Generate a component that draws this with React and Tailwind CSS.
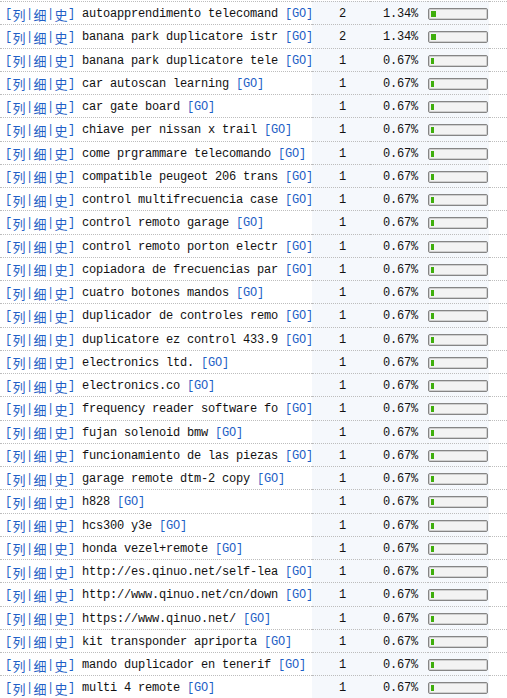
import React from 'react'

const rows = [
  ['autoapprendimento telecomand', 2],
  ['banana park duplicatore istr', 2],
  ['banana park duplicatore tele', 1],
  ['car autoscan learning', 1],
  ['car gate board', 1],
  ['chiave per nissan x trail', 1],
  ['come prgrammare telecomando', 1],
  ['compatible peugeot 206 trans', 1],
  ['control multifrecuencia case', 1],
  ['control remoto garage', 1],
  ['control remoto porton electr', 1],
  ['copiadora de frecuencias par', 1],
  ['cuatro botones mandos', 1],
  ['duplicador de controles remo', 1],
  ['duplicatore ez control 433.9', 1],
  ['electronics ltd.', 1],
  ['electronics.co', 1],
  ['frequency reader software fo', 1],
  ['fujan solenoid bmw', 1],
  ['funcionamiento de las piezas', 1],
  ['garage remote dtm-2 copy', 1],
  ['h828', 1],
  ['hcs300 y3e', 1],
  ['honda vezel+remote', 1],
  ['http://es.qinuo.net/self-lea', 1],
  ['http://www.qinuo.net/cn/down', 1],
  ['https://www.qinuo.net/', 1],
  ['kit transponder apriporta', 1],
  ['mando duplicador en tenerif', 1],
  ['multi 4 remote', 1],
]

const mono = "font-['Liberation_Mono','Noto_Sans_CJK_SC',monospace] text-[12px] tracking-[-0.2px]"
const cjk = "font-['Noto_Sans_CJK_SC',sans-serif] text-[13px]"

function Tag() {
  const parts = ['[', '列', '|', '细', '|', '史', ']']
  return (
    <span className="inline-flex items-center text-[#1f5fc6]">
      {parts.map((p, i) =>
        /[\u4e00-\u9fff]/.test(p) ? (
          <span key={i} className={`${cjk} inline-block w-[14px] text-center leading-none`}>{p}</span>
        ) : (
          <span key={i} className={`${mono} inline-block w-[7px] text-center leading-none`}>{p}</span>
        )
      )}
    </span>
  )
}

function Bar({ count }) {
  const w = count === 2 ? 5 : 3
  return (
    <div className="w-[60px] h-[12px] rounded-[2px] border border-[#858585] bg-[#f3f3f3] p-[1px] shadow-[inset_0_0_0_1px_#d0d0d0]">
      <div className="h-full flex items-stretch pl-px py-px">
        <div className="bg-[#3fae0c]" style={{ width: w }} />
      </div>
    </div>
  )
}

export default function App() {
  const cell = 'h-[23.25px] border-t border-dotted border-[#bdbdbd] flex items-center pt-[2px]'
  return (
    <div className="w-[507px] bg-white pt-px overflow-hidden">
      <div className="grid grid-cols-[312px_58px_58px_61px_18px]">
        {rows.map(([kw, n], i) => (
          <React.Fragment key={i}>
            <div className={`${cell} pl-[5px] whitespace-nowrap`}>
              <Tag />
              <span className={`${mono} ml-[7px] text-[#111]`}>{kw}</span>
              <span className={`${mono} ml-[7px] text-[#1f5fc6]`}>[GO]</span>
            </div>
            <div className={`${cell} bg-[#f5f8fc] pl-[27px] ${mono} text-[#111]`}>{n}</div>
            <div className={`${cell} bg-[#f5f8fc] pl-[13px] ${mono} text-[#111]`}>{n === 2 ? '1.34%' : '0.67%'}</div>
            <div className={`${cell} bg-[#f5f8fc]`}><Bar count={n} /></div>
            <div className={cell} />
          </React.Fragment>
        ))}
      </div>
    </div>
  )
}
